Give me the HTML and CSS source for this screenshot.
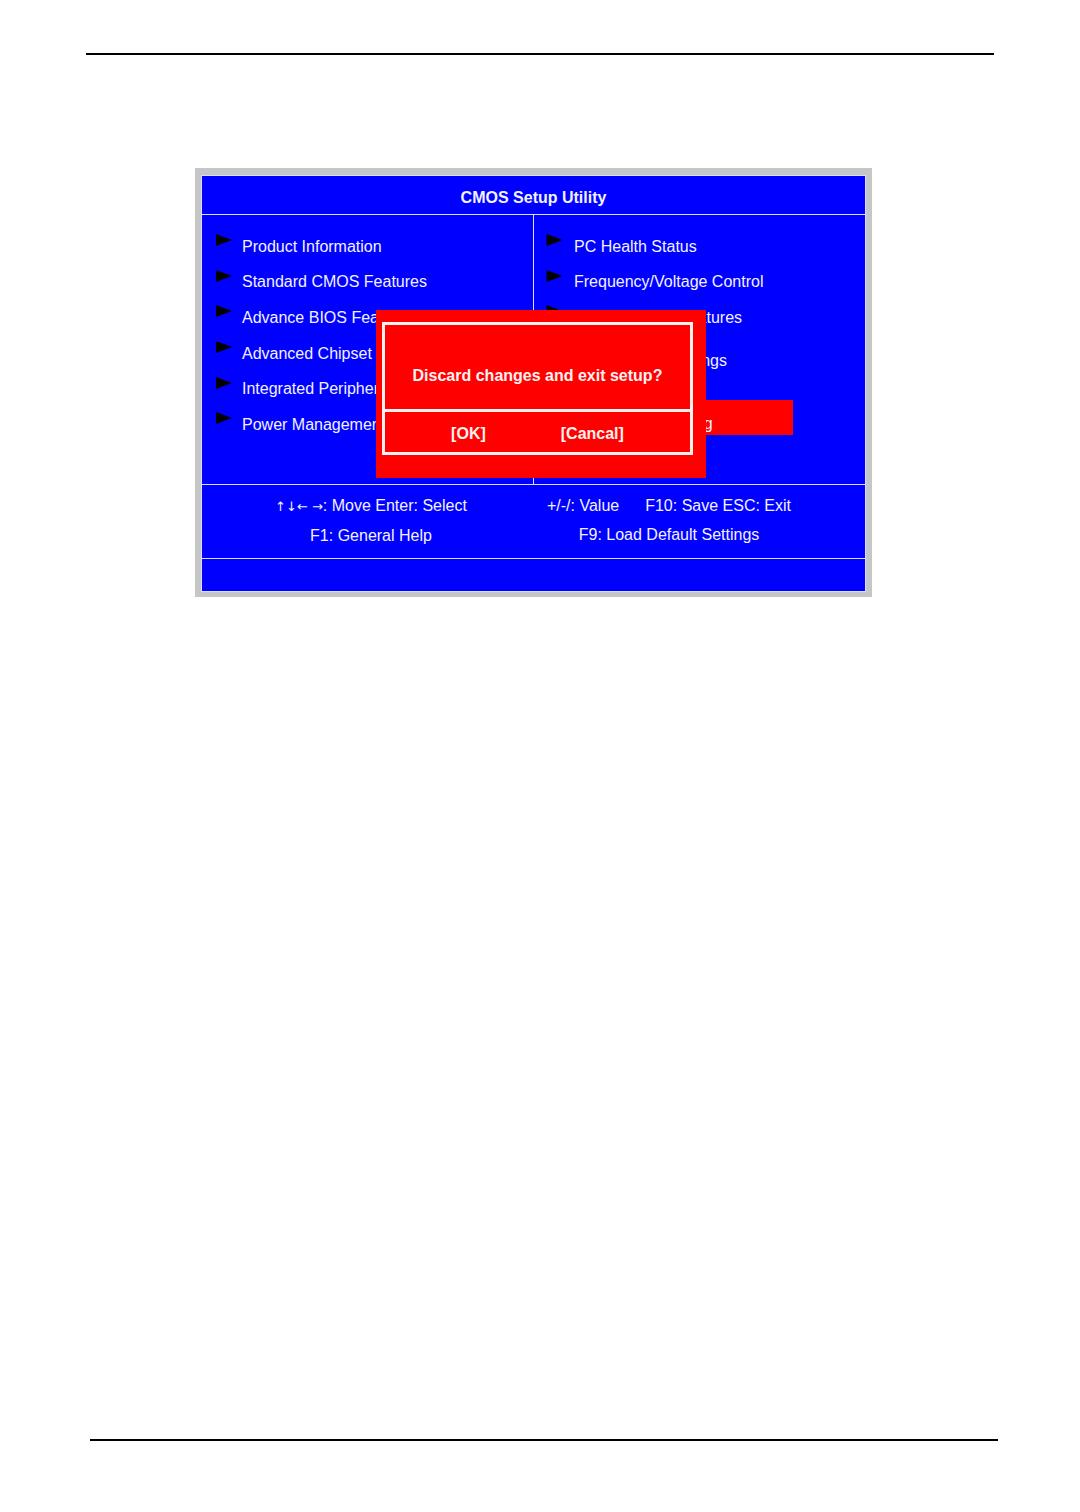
FILE: index.html
```html
<!DOCTYPE html>
<html lang="en">
<head>
<meta charset="utf-8">
<title>CMOS Setup Utility</title>
<link rel="stylesheet" href="styles.css">
</head>
<body>
<div class="page">
  <div class="rule rule-top"></div>

  <div class="screen">
    <div class="bios">
      <div class="bios-title">CMOS Setup Utility</div>

      <div class="bios-body">
        <div class="col col-left">
          <div class="item"><svg class="arrow" viewBox="0 0 16 12"><polygon points="0,0 16,6 0,12"/></svg><span>Product Information</span></div>
          <div class="item"><svg class="arrow" viewBox="0 0 16 12"><polygon points="0,0 16,6 0,12"/></svg><span>Standard CMOS Features</span></div>
          <div class="item"><svg class="arrow" viewBox="0 0 16 12"><polygon points="0,0 16,6 0,12"/></svg><span>Advance BIOS Features</span></div>
          <div class="item"><svg class="arrow" viewBox="0 0 16 12"><polygon points="0,0 16,6 0,12"/></svg><span>Advanced Chipset Features</span></div>
          <div class="item"><svg class="arrow" viewBox="0 0 16 12"><polygon points="0,0 16,6 0,12"/></svg><span>Integrated Peripherals</span></div>
          <div class="item"><svg class="arrow" viewBox="0 0 16 12"><polygon points="0,0 16,6 0,12"/></svg><span>Power Management Setup</span></div>
        </div>
        <div class="col col-right">
          <div class="item"><svg class="arrow" viewBox="0 0 16 12"><polygon points="0,0 16,6 0,12"/></svg><span>PC Health Status</span></div>
          <div class="item"><svg class="arrow" viewBox="0 0 16 12"><polygon points="0,0 16,6 0,12"/></svg><span>Frequency/Voltage Control</span></div>
          <div class="item"><svg class="arrow" viewBox="0 0 16 12"><polygon points="0,0 16,6 0,12"/></svg><span>BIOS Security Features</span></div>
          <div class="item item-lower"><svg class="arrow" viewBox="0 0 16 12"><polygon points="0,0 16,6 0,12"/></svg><span>Load Default Settings</span></div>
          <div class="item item-short"><span>Save &amp; Exit Setup</span></div>
          <div class="item item-selected"><span>Exit Without Saving</span></div>
        </div>
      </div>

      <div class="bios-footer">
        <div class="help help-left">
          <div><span class="keys">↑↓← →</span>: Move Enter: Select</div>
          <div>F1: General Help</div>
        </div>
        <div class="help help-right">
          <div>+/-/: Value<span class="spaced">F10: Save ESC: Exit</span></div>
          <div>F9: Load Default Settings</div>
        </div>
      </div>

      <div class="bios-band"></div>

      <div class="dialog">
        <div class="dialog-box">
          <div class="dialog-msg">Discard changes and exit setup?</div>
          <div class="dialog-buttons">
            <span>[OK]</span>
            <span>[Cancal]</span>
          </div>
        </div>
      </div>
    </div>
  </div>

  <div class="rule rule-bottom"></div>
</div>
</body>
</html>
```

FILE: styles.css
```css
html, body {
  margin: 0;
  padding: 0;
  background: #ffffff;
}

.page {
  width: 1080px;
  height: 1512px;
  display: flex;
  flex-direction: column;
  font-family: "Liberation Sans", Arial, sans-serif;
}

.rule {
  height: 2px;
  background: #000000;
  width: 908px;
}

.rule-top {
  margin-top: 53px;
  margin-left: 86px;
}

.rule-bottom {
  margin-top: 842px;
  margin-left: 90px;
}

.screen {
  margin-top: 113px;
  margin-left: 195px;
  width: 665px;
  padding: 7px 6px 5px 6px;
  background: #c4c6c8;
}

.bios {
  position: relative;
  background: #0000ff;
  border: 1px solid #dcdcff;
  color: #f2f2ff;
  font-size: 16px;
  display: flex;
  flex-direction: column;
}

.bios-title {
  height: 39px;
  border-bottom: 1px solid #dcdcff;
  display: flex;
  justify-content: center;
  align-items: center;
  box-sizing: border-box;
  padding-top: 6px;
  font-weight: bold;
}

.bios-body {
  height: 269px;
  border-bottom: 1px solid #dcdcff;
  display: flex;
}

.col {
  width: 331px;
  padding-top: 13px;
  box-sizing: border-box;
  display: flex;
  flex-direction: column;
}

.col-left {
  border-right: 1px solid #dcdcff;
  width: 332px;
  padding-left: 14px;
}

.col-right {
  padding-left: 12px;
}

.item {
  height: 35.6px;
  display: flex;
  align-items: center;
  line-height: 19px;
  white-space: nowrap;
  padding-top: 1px;
  box-sizing: border-box;
}

.arrow {
  width: 16px;
  height: 12px;
  fill: #000000;
  margin-right: 10px;
  margin-bottom: 12px;
  flex: none;
}

.col-right .arrow {
  width: 17px;
  margin-right: 11px;
}

.item-lower {
  margin-top: 7px;
}

.item-short {
  height: 22.6px;
}

.item-selected {
  height: 35px;
  background: #ff0000;
  margin-left: -6px;
  width: 253px;
  padding-left: 34px;
  padding-top: 12px;
}

.bios-footer {
  height: 74px;
  border-bottom: 1px solid #dcdcff;
  box-sizing: border-box;
  padding-top: 6px;
  display: grid;
  grid-template-columns: 338px 258px;
  line-height: 29px;
}

.help {
  text-align: center;
  white-space: nowrap;
}

.keys {
  font-family: "DejaVu Sans", sans-serif;
  font-size: 13px;
}

.spaced {
  margin-left: 26px;
}

.bios-band {
  height: 32px;
}

.dialog {
  position: absolute;
  left: 174px;
  top: 134px;
  width: 330px;
  height: 168px;
  background: #ff0000;
  box-sizing: border-box;
  padding: 12px 13px 23px 6px;
  color: #fff2f2;
  font-weight: bold;
}

.dialog-box {
  height: 100%;
  box-sizing: border-box;
  border: 3px solid #fff0f0;
  display: flex;
  flex-direction: column;
}

.dialog-msg {
  height: 87px;
  box-sizing: border-box;
  padding-top: 41px;
  line-height: 20px;
  text-align: center;
  border-bottom: 3px solid #fff0f0;
}

.dialog-buttons {
  flex: 1;
  display: flex;
  justify-content: center;
  align-items: center;
  gap: 75px;
  padding-top: 3px;
}
```
